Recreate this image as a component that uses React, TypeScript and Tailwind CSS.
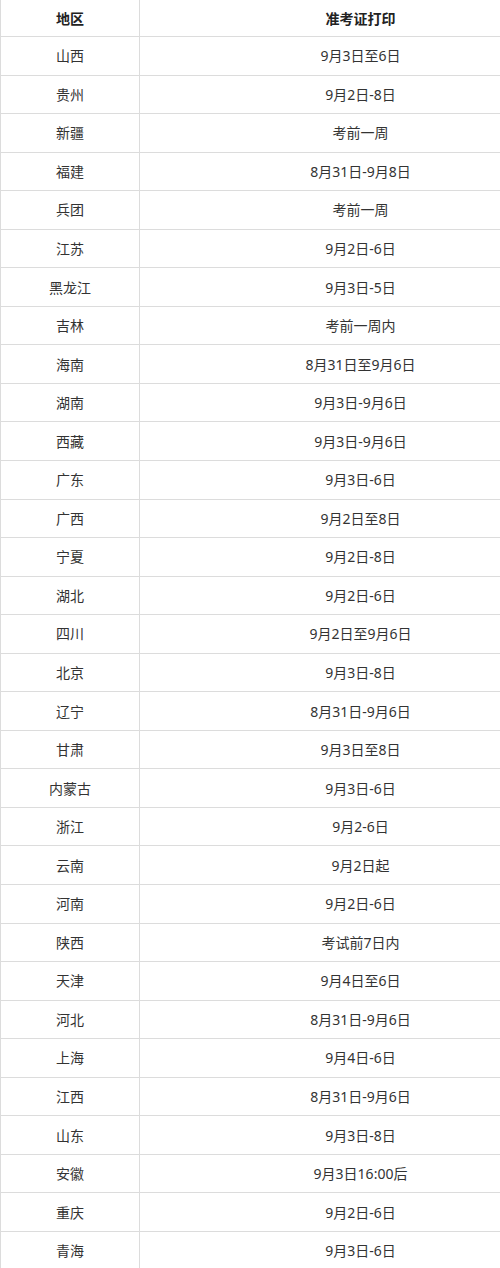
import React from "react";

const rows: [string, string][] = [
  ["山西", "9月3日至6日"],
  ["贵州", "9月2日-8日"],
  ["新疆", "考前一周"],
  ["福建", "8月31日-9月8日"],
  ["兵团", "考前一周"],
  ["江苏", "9月2日-6日"],
  ["黑龙江", "9月3日-5日"],
  ["吉林", "考前一周内"],
  ["海南", "8月31日至9月6日"],
  ["湖南", "9月3日-9月6日"],
  ["西藏", "9月3日-9月6日"],
  ["广东", "9月3日-6日"],
  ["广西", "9月2日至8日"],
  ["宁夏", "9月2日-8日"],
  ["湖北", "9月2日-6日"],
  ["四川", "9月2日至9月6日"],
  ["北京", "9月3日-8日"],
  ["辽宁", "8月31日-9月6日"],
  ["甘肃", "9月3日至8日"],
  ["内蒙古", "9月3日-6日"],
  ["浙江", "9月2-6日"],
  ["云南", "9月2日起"],
  ["河南", "9月2日-6日"],
  ["陕西", "考试前7日内"],
  ["天津", "9月4日至6日"],
  ["河北", "8月31日-9月6日"],
  ["上海", "9月4日-6日"],
  ["江西", "8月31日-9月6日"],
  ["山东", "9月3日-8日"],
  ["安徽", "9月3日16:00后"],
  ["重庆", "9月2日-6日"],
  ["青海", "9月3日-6日"],
];

export default function App() {
  return (
    <div
      className="w-[500px] h-[1268px] overflow-hidden bg-white text-[14px] text-[#333]"
      style={{ fontFamily: '"Noto Sans", "Noto Sans CJK SC", sans-serif' }}
    >
      <div className="w-[581px] border-l border-[#dcdcdc]">
        <div className="grid grid-cols-[139px_1fr] h-[36px] font-bold text-[#222]">
          <div className="flex items-center justify-center border-r border-[#dcdcdc]">地区</div>
          <div className="flex items-center justify-center">准考证打印</div>
        </div>
        {rows.map(([a, b]) => (
          <div key={a} className="grid grid-cols-[139px_1fr] h-[38.55px] border-t border-[#dcdcdc]">
            <div className="flex items-center justify-center border-r border-[#dcdcdc]">{a}</div>
            <div className="flex items-center justify-center">{b}</div>
          </div>
        ))}
      </div>
    </div>
  );
}
